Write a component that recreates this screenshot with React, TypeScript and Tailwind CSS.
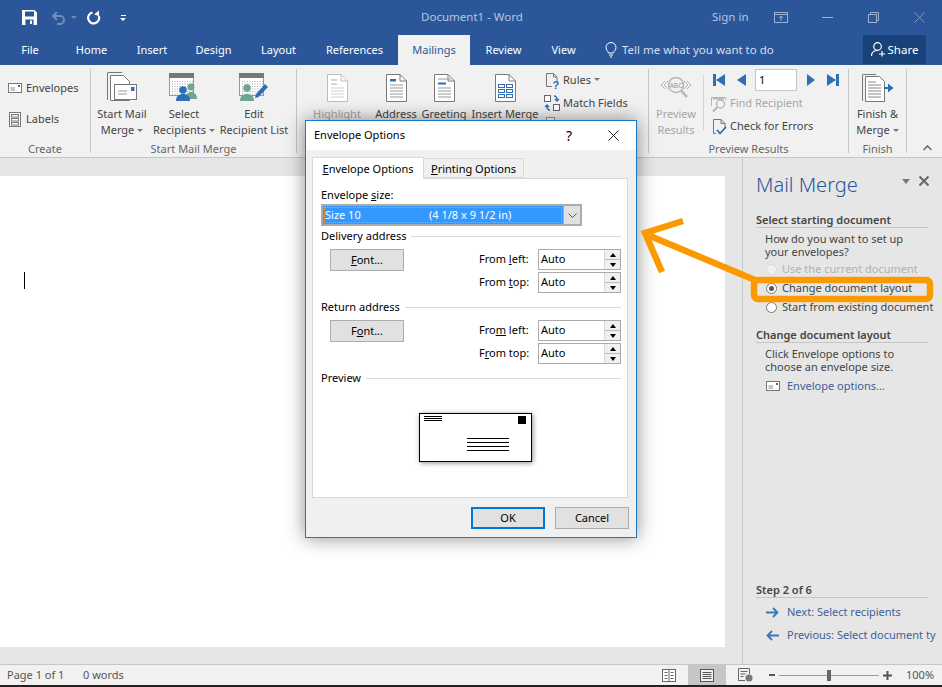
import React from "react";

const blue = "#2f6eb5";
const green = "#6fa58f";

function Save() {
  return (
    <svg width="15" height="15" viewBox="0 0 15 15">
      <path d="M0 0h12.500l2.500 2.500v12.500h-15z" fill="#fff" />
      <rect x="3" y="1.500" width="9" height="5" fill="#2b579a" />
      <rect x="3.500" y="9.500" width="8" height="5.500" fill="#2b579a" />
      <rect x="8" y="10.500" width="2" height="3.500" fill="#fff" />
    </svg>
  );
}

function Undo() {
  return (
    <svg width="15" height="14" viewBox="0 0 15 14" fill="none" stroke="#6f8dbb" strokeWidth="2">
      <path d="M6 1 2 5l4 4" />
      <path d="M2 5h7a4 4 0 0 1 0 8H6" />
    </svg>
  );
}

function Redo() {
  return (
    <svg width="15" height="15" viewBox="0 0 15 15" fill="none" stroke="#fff" strokeWidth="2.200">
      <path d="M6.500 2.500A5.500 5.500 0 1 0 12.800 6" />
      <path d="M8 4.500 13 .5V6z" fill="#fff" stroke="none" />
    </svg>
  );
}

function EnvSmall() {
  return (
    <svg width="14" height="10" viewBox="0 0 14 10" fill="none" className="shrink-0">
      <rect x=".5" y=".5" width="13" height="9" fill="#fff" stroke="#777" />
      <path d="M2.500 5H7M2.500 7H7" stroke="#888" />
      <rect x="10" y="2" width="2" height="2" fill={blue} />
    </svg>
  );
}

function LabelsIcon() {
  return (
    <svg width="12" height="15" viewBox="0 0 12 15" fill="#fff" stroke="#777" className="shrink-0">
      <rect x=".5" y=".5" width="11" height="14" />
      <rect x="2.500" y="2.500" width="7" height="2.500" />
      <rect x="2.500" y="6.500" width="7" height="2.500" />
      <rect x="2.500" y="10.500" width="7" height="2.500" />
    </svg>
  );
}

function StartMailIcon() {
  return (
    <svg width="30" height="31" viewBox="0 0 30 31" fill="none">
      <path d="M.5 1v27" stroke="#777" />
      <path d="M.5.5H15" stroke="#777" />
      <path d="M3.500 3.500h13l6 6v19h-19z" fill="#fff" stroke="#777" />
      <rect x="7.500" y="12.500" width="22" height="15" fill="#fff" stroke="#777" />
      <path d="M11 19h9M11 22h9" stroke="#999" />
      <rect x="24" y="15" width="3.500" height="4" fill={blue} />
    </svg>
  );
}

function Calendar() {
  const dots = [];
  for (let y = 8; y < 22; y += 2.500) {
    for (let x = 3; x < 25; x += 2.500) {
      dots.push(<rect key={x + "-" + y} x={x} y={y} width="1" height="1" fill="#aaa" />);
    }
  }
  return (
    <>
      <rect x=".5" y=".5" width="24" height="22" fill="#fff" stroke="#999" />
      <rect x="0" y="0" width="25" height="5" fill="#777" />
      {dots}
    </>
  );
}

function SelectIcon() {
  return (
    <svg width="30" height="29" viewBox="0 0 30 29">
      <Calendar />
      <circle cx="22" cy="14" r="3.500" fill={green} />
      <path d="M16 26c0-5 3-7 6-7s6 2 6 7z" fill={green} />
      <circle cx="14" cy="17" r="3.800" fill={blue} />
      <path d="M7 28c0-5 3-7 7-7s7 2 7 7z" fill={blue} />
    </svg>
  );
}

function EditIcon() {
  return (
    <svg width="30" height="29" viewBox="0 0 30 29">
      <Calendar />
      <circle cx="8" cy="15" r="3.800" fill={green} />
      <path d="M1 28c0-5 3-7 7-7s7 2 7 7z" fill={green} />
      <path d="M16 25l1-4L26 11l3 3-9.500 10z" fill={blue} />
    </svg>
  );
}

function Doc({ faded, children }: { faded?: boolean; children?: React.ReactNode }) {
  const line = faded ? "#c3bcc2" : "#7a7a7a";
  return (
    <svg width="21" height="28" viewBox="0 0 21 28" fill="none">
      <path d="M.5.500h13.500l6.500 6.500v20.500h-20z" fill="#fff" stroke={line} />
      <path d="M14 .5V7h6.500" stroke={line} />
      {children}
    </svg>
  );
}

function Lines({ ys, color = "#999" }: { ys: number[]; color?: string }) {
  return (
    <>
      {ys.map((y) => (
        <path key={y} d={`M4 ${y}h13`} stroke={color} />
      ))}
    </>
  );
}

function RulesIcon() {
  return (
    <svg width="15" height="16" viewBox="0 0 15 16" fill="none" className="shrink-0">
      <path d="M.5.500h7l3.500 3.500v6M.5.500v13H6" stroke="#777" />
      <path d="M7.500.500V4H11" stroke="#777" />
      <text x="6.500" y="15.500" fontSize="11" fontWeight="700" fill={blue} fontFamily="Liberation Sans, sans-serif">?</text>
    </svg>
  );
}

function MatchIcon() {
  return (
    <svg width="16" height="16" viewBox="0 0 16 16" fill="none" className="shrink-0">
      <rect x=".5" y=".5" width="6" height="6" fill="#fff" stroke="#666" />
      <rect x="9.500" y="9.500" width="6" height="6" fill="#fff" stroke="#666" />
      <path d="M10 1c2 0 3 1 3 4M11 4l2 2 2-2" stroke={blue} strokeWidth="1.400" />
      <path d="M6 15c-2 0-3-1-3-4M1 12l2-2 2 2" stroke={blue} strokeWidth="1.400" />
    </svg>
  );
}

function PreviewIcon() {
  return (
    <svg width="32" height="22" viewBox="0 0 32 22" fill="none" stroke="#b5b5b5">
      <path d="M5 4 1 8l4 4M8 4 4 8l4 4M27 4l4 4-4 4M24 4l4 4-4 4" />
      <circle cx="16" cy="8" r="7.500" fill="#f1f1f1" strokeWidth="1.500" />
      <path d="M21 13.500 27 20" strokeWidth="2.500" />
      <text x="9.500" y="10.500" fontSize="6.500" fill="#999" stroke="none" fontFamily="Liberation Sans, sans-serif">ABC</text>
    </svg>
  );
}

function FindIcon() {
  return (
    <svg width="16" height="16" viewBox="0 0 16 16" fill="none" stroke="#b5b5b5" className="shrink-0">
      <path d="M.5 10V1.500h14V4" />
      <path d="M2 2.500h11" strokeWidth="2" />
      <circle cx="9.500" cy="8" r="4" fill="#f1f1f1" strokeWidth="1.300" />
      <path d="M6.500 11 2 15.500" strokeWidth="2" />
    </svg>
  );
}

function CheckIcon() {
  return (
    <svg width="14" height="16" viewBox="0 0 14 16" fill="none" className="shrink-0">
      <path d="M.5.500h7.500L12 4.500v5M.5.500v14H3" stroke="#777" />
      <path d="M8 .5V4.500h4" stroke="#777" />
      <path d="M4 11l3 3.500L13 8" stroke={blue} strokeWidth="1.800" />
    </svg>
  );
}

function FinishIcon() {
  return (
    <svg width="32" height="28" viewBox="0 0 32 28" fill="none">
      <path d="M.5 1v26" stroke="#777" />
      <path d="M.5.500H14" stroke="#777" />
      <path d="M3.500 2.500h14l5 5v20h-19z" fill="#fff" stroke="#777" />
      <path d="M6 8h8M6 11h13M6 14h13M6 17h13M6 20h13M6 23h13" stroke="#888" />
      <path d="M22 13h4V9.500l5.500 4.500-5.500 4.500V15h-4z" fill={blue} />
    </svg>
  );
}

function Caret({ color = "#777" }: { color?: string }) {
  return <span className="inline-block ml-[3px] mb-[2px] w-0 h-0 border-x-[3px] border-x-transparent border-t-[3px]" style={{ borderTopColor: color }} />;
}

function BigButton({ width, icon, top, bottom, dim, caret }: { width: string; icon: React.ReactNode; top: string; bottom?: string; dim?: boolean; caret?: boolean }) {
  return (
    <div className={`${width} flex flex-col items-center shrink-0 leading-4 whitespace-nowrap ${dim ? "text-[#a6a6a6]" : ""}`}>
      <div className="h-[37px] flex items-center justify-center">{icon}</div>
      <div>{top}</div>
      {bottom && (
        <div>
          {bottom}
          {caret && <Caret />}
        </div>
      )}
    </div>
  );
}

function Group({ width, label, children }: { width: string; label: string; children: React.ReactNode }) {
  return (
    <div className={`${width} h-[84px] mt-[4px] border-r border-[#c6c6c6] shrink-0 flex flex-col`}>
      <div className="h-[69px] shrink-0 flex">{children}</div>
      <div className="mt-[3px] shrink-0 h-4 leading-4 text-center text-[#666] whitespace-nowrap">{label}</div>
    </div>
  );
}

function Spinner({ label }: { label: React.ReactNode }) {
  return (
    <div className="flex items-center h-[21px]">
      <div className="w-[59px] whitespace-nowrap">{label}</div>
      <div className="w-[83px] h-[21px] border border-[#ababab] bg-white flex items-center pl-[2px] justify-between">
        <span>Auto</span>
        <div className="w-[16px] h-full flex flex-col bg-[#f0f0f0] border-l border-[#d9d9d9]">
          <div className="flex-1 flex items-center justify-center border-b border-[#bbb]">
            <span className="w-0 h-0 border-x-[3px] border-x-transparent border-b-[4px] border-b-black" />
          </div>
          <div className="flex-1 flex items-center justify-center">
            <span className="w-0 h-0 border-x-[3px] border-x-transparent border-t-[4px] border-t-black" />
          </div>
        </div>
      </div>
    </div>
  );
}

function Legend({ text }: { text: string }) {
  return (
    <div className="flex items-center h-4 gap-[5px]">
      <span className="whitespace-nowrap">{text}</span>
      <div className="flex-1 h-px bg-[#d9d9d9]" />
    </div>
  );
}

function AddressRow({ f, left, top }: { f: React.ReactNode; left: React.ReactNode; top: React.ReactNode }) {
  return (
    <div className="flex mt-[5px]">
      <div className="ml-[9px] w-[74px] h-[22px] bg-[#e1e1e1] border border-[#adadad] flex items-center justify-center">{f}</div>
      <div className="ml-[75px] flex flex-col gap-[2px]">
        <Spinner label={left} />
        <Spinner label={top} />
      </div>
    </div>
  );
}

function Radio({ label, state }: { label: string; state: "off" | "on" | "dim" }) {
  return (
    <div className={`h-[19px] flex items-center pl-[10px] whitespace-nowrap ${state === "dim" ? "text-[#b1b1b1]" : ""}`}>
      <span className={`w-[11px] h-[11px] shrink-0 rounded-full border flex items-center justify-center ${state === "dim" ? "border-[#dcdcdc] bg-[#f1f1f1]" : "border-[#777] bg-white"}`}>
        {state === "on" && <span className="w-[5px] h-[5px] rounded-full bg-[#555]" />}
      </span>
      <span className="ml-[5px]">{label}</span>
    </div>
  );
}

function Heading({ text }: { text: string }) {
  return <div className="h-4 leading-[15px] mr-[14px] border-b border-[#c6c6c6] font-semibold text-[#444] whitespace-nowrap">{text}</div>;
}

function StepLink({ dir, text }: { dir: "next" | "prev"; text: string }) {
  return (
    <div className="h-4 flex items-center pl-[10px] text-[#3f5f99] whitespace-nowrap">
      <svg width="13" height="11" viewBox="0 0 13 11" fill="none" stroke="#3c78b8" strokeWidth="1.800" className="shrink-0">
        {dir === "next" ? <path d="M0 5.500h11M7 1l4.500 4.500L7 10" /> : <path d="M13 5.500H2M6 1 1.500 5.500 6 10" />}
      </svg>
      <span className="ml-[8px]">{text}</span>
    </div>
  );
}

export default function App() {
  return (
    <div className="relative w-[942px] h-[687px] overflow-hidden flex flex-col bg-[#e6e6e6] text-[11px] text-[#444] font-['Noto_Sans',sans-serif]">
      {/* title bar */}
      <div className="h-[35px] shrink-0 bg-[#2b579a] flex items-center text-[#b4c6e0] text-[11.5px]">
        <div className="ml-[22px]"><Save /></div>
        <div className="ml-[14px]"><Undo /></div>
        <span className="ml-[5px] w-0 h-0 border-x-[3px] border-x-transparent border-t-[3px] border-t-[#6f8dbb]" />
        <div className="ml-[9px]"><Redo /></div>
        <div className="ml-[19px] flex flex-col items-center gap-[2px]">
          <span className="w-[5px] h-px bg-white" />
          <span className="w-0 h-0 border-x-[3px] border-x-transparent border-t-[3px] border-t-white" />
        </div>
        <div className="ml-[293px] w-[106px] -mt-[2px] text-center whitespace-nowrap">Document1 - Word</div>
        <div className="ml-[187px] w-[38px] -mt-[2px] whitespace-nowrap">Sign in</div>
        <svg className="ml-[24px]" width="14" height="11" viewBox="0 0 14 11" fill="none" stroke="#9db3d3">
          <rect x=".5" y=".5" width="13" height="10" />
          <path d="M.5 2.500h13M7 9V4M5 6l2-2 2 2" />
        </svg>
        <div className="ml-[34px] w-[11px] h-px bg-[#9db3d3]" />
        <svg className="ml-[35px]" width="11" height="11" viewBox="0 0 11 11" fill="none" stroke="#9db3d3">
          <rect x=".5" y="2.500" width="8" height="8" />
          <path d="M2.500 2.500v-2h8v8h-2" />
        </svg>
        <svg className="ml-[35px]" width="11" height="11" viewBox="0 0 11 11" fill="none" stroke="#7e99c4">
          <path d="M.5.500l10 10M10.500.500l-10 10" />
        </svg>
      </div>

      {/* tabs */}
      <div className="h-[30px] shrink-0 bg-[#2b579a] flex text-white">
        {[
          ["File", "w-[60px]"],
          ["Home", "w-[63px]"],
          ["Insert", "w-[58px]"],
          ["Design", "w-[65px]"],
          ["Layout", "w-[65px]"],
          ["References", "w-[87px]"],
        ].map(([name, w]) => (
          <div key={name} className={`${w} h-full flex items-center justify-center`}>{name}</div>
        ))}
        <div className="w-[72px] h-full bg-[#f1f1f1] text-[#2b579a] flex items-center justify-center">Mailings</div>
        <div className="w-[67px] h-full flex items-center justify-center">Review</div>
        <div className="w-[53px] h-full flex items-center justify-center">View</div>
        <div className="ml-[15px] w-[258px] h-full flex items-center text-[#d5dfed] text-[11.5px] whitespace-nowrap">
          <svg width="12" height="16" viewBox="0 0 12 16" fill="none" stroke="#fff">
            <path d="M3.500 11C3 9 1 8 1 5.500a5 5 0 0 1 10 0C11 8 9 9 8.500 11zM4 13h4M5 15h2" />
          </svg>
          <span className="ml-[5px]">Tell me what you want to do</span>
        </div>
        <div className="w-[63px] h-[29px] bg-[#17437a] text-[11.5px] flex items-center justify-center gap-[3px]">
          <svg width="14" height="15" viewBox="0 0 14 15" fill="none" stroke="#fff" strokeWidth="1.200">
            <circle cx="6.500" cy="4.500" r="3.800" />
            <path d="M.5 14c0-3.500 2.500-5.500 6-5.500M11 9v5.500M8 12h6" />
          </svg>
          <span>Share</span>
        </div>
      </div>

      {/* ribbon */}
      <div className="h-[93px] shrink-0 bg-[#f1f1f1] border-b border-[#c6c6c6] flex">
        <Group width="w-[91px]" label="Create">
          <div className="flex flex-col">
            <div className="mt-[11px] h-4 flex items-center pl-[8px] whitespace-nowrap">
              <EnvSmall />
              <span className="ml-[4px]">Envelopes</span>
            </div>
            <div className="mt-[15px] h-4 flex items-center pl-[9px] whitespace-nowrap">
              <LabelsIcon />
              <span className="ml-[5px]">Labels</span>
            </div>
          </div>
        </Group>
        <Group width="w-[206px]" label="Start Mail Merge">
          <BigButton width="w-[62px]" icon={<StartMailIcon />} top="Start Mail" bottom="Merge" caret />
          <BigButton width="w-[62px]" icon={<SelectIcon />} top="Select" bottom="Recipients" caret />
          <BigButton width="w-[78px]" icon={<EditIcon />} top="Edit" bottom="Recipient List" />
        </Group>
        <Group width="w-[352px]" label="">
          <div className="w-[10px]" />
          <BigButton width="w-[60px]" dim icon={<Doc faded><rect x="4" y="5" width="6" height="2" fill="#dcd0da" /><rect x="4" y="9" width="6" height="2" fill="#dcd0da" /><Lines ys={[14, 17, 20, 23]} color="#d7cbd4" /></Doc>} top="Highlight" />
          <div className="w-[5px]" />
          <BigButton width="w-[48px]" icon={<Doc><rect x="4" y="5" width="6" height="2.500" fill={blue} /><Lines ys={[11, 14, 17, 20, 23]} /></Doc>} top="Address" />
          <BigButton width="w-[48px]" icon={<Doc><Lines ys={[5, 14, 17, 20, 23]} /><rect x="4" y="8.500" width="8" height="2" fill={blue} /></Doc>} top="Greeting" />
          <BigButton width="w-[74px]" icon={<Doc><g stroke={blue} fill="none"><rect x="3.500" y="10.500" width="6" height="3" /><rect x="11.500" y="10.500" width="6" height="3" /><rect x="3.500" y="15.500" width="6" height="3" /><rect x="11.500" y="15.500" width="6" height="3" /><rect x="3.500" y="20.500" width="6" height="3" /><rect x="11.500" y="20.500" width="6" height="3" /></g></Doc>} top="Insert Merge" />
          <div className="flex flex-col ml-[2px] whitespace-nowrap">
            <div className="h-[23px] flex items-center pl-[2px]">
              <RulesIcon />
              <span className="ml-[2px]">Rules</span>
              <Caret />
            </div>
            <div className="h-[22px] flex items-center">
              <MatchIcon />
              <span className="ml-[3px]">Match Fields</span>
            </div>
            <div className="mt-[3px] ml-[2px] w-[9px] h-[6px] border border-[#999] bg-white" />
          </div>
        </Group>
        <Group width="w-[200px]" label="Preview Results">
          <BigButton width="w-[54px]" dim icon={<PreviewIcon />} top="Preview" bottom="Results" />
          <div className="w-px h-[55px] mt-[6px] bg-[#d4d4d4]" />
          <div className="flex flex-col">
            <div className="h-[22px] flex items-center pl-[9px]">
              <svg width="12" height="12" viewBox="0 0 12 12" fill={blue}><rect width="3" height="12" /><path d="M12 0v12L3 6z" /></svg>
              <svg className="ml-[12px]" width="9" height="12" viewBox="0 0 9 12" fill={blue}><path d="M9 0v12L0 6z" /></svg>
              <div className="ml-[9px] w-[42px] h-[22px] bg-white border border-[#c6c6c6] flex items-center pl-[3px] text-black">1</div>
              <svg className="ml-[10px]" width="8" height="12" viewBox="0 0 8 12" fill={blue}><path d="M0 0v12l8-6z" /></svg>
              <svg className="ml-[12px]" width="12" height="12" viewBox="0 0 12 12" fill={blue}><rect x="9" width="3" height="12" /><path d="M0 0v12l9-6z" /></svg>
            </div>
            <div className="mt-px h-[23px] flex items-center pl-[7px] text-[#a6a6a6] whitespace-nowrap">
              <FindIcon />
              <span className="ml-[3px]">Find Recipient</span>
            </div>
            <div className="h-[23px] flex items-center pl-[9px] whitespace-nowrap">
              <CheckIcon />
              <span className="ml-[3px]">Check for Errors</span>
            </div>
          </div>
        </Group>
        <Group width="w-[58px]" label="Finish">
          <BigButton width="w-[57px]" icon={<FinishIcon />} top="Finish &" bottom="Merge" caret />
        </Group>
        <div className="flex-1 relative">
          <svg className="absolute right-[10px] bottom-[6px]" width="9" height="6" viewBox="0 0 9 6" fill="none" stroke="#666" strokeWidth="1.500">
            <path d="M.5 5 4.500 1l4 4" />
          </svg>
        </div>
      </div>

      {/* document and task pane */}
      <div className="flex-1 flex min-h-0">
        <div className="w-[742px] shrink-0 pt-[18px] pb-[17px]">
          <div className="w-[725px] h-full bg-white pt-[96px] pl-[24px]">
            <div className="w-px h-[17px] bg-black" />
          </div>
        </div>
        <div className="flex-1 border-l border-[#c6c6c6] pl-[13px] pt-[13px] pb-[21px] flex flex-col overflow-hidden">
          <div className="flex items-center h-[28px]">
            <span className="text-[20px] leading-7 text-[#2b579a] font-light whitespace-nowrap">Mail Merge</span>
            <span className="ml-auto mb-[8px] w-0 h-0 border-x-[4px] border-x-transparent border-t-[5px] border-t-[#777]" />
            <svg className="ml-[9px] mr-[13px] mb-[8px]" width="10" height="10" viewBox="0 0 10 10" fill="none" stroke="#666" strokeWidth="2">
              <path d="M.5.500l9 9M9.500.500l-9 9" />
            </svg>
          </div>
          <div className="mt-[13px]"><Heading text="Select starting document" /></div>
          <div className="mt-[4px] pl-[9px] leading-[13px] whitespace-nowrap">How do you want to set up<br />your envelopes?</div>
          <div className="mt-[2px]">
            <Radio label="Use the current document" state="dim" />
            <Radio label="Change document layout" state="on" />
            <Radio label="Start from existing document" state="off" />
          </div>
          <div className="mt-[10px]"><Heading text="Change document layout" /></div>
          <div className="mt-[4px] pl-[9px] leading-[13px] whitespace-nowrap">Click Envelope options to<br />choose an envelope size.</div>
          <div className="mt-[5px] h-4 pl-[10px] flex items-center text-[#3f5f99] whitespace-nowrap">
            <EnvSmall />
            <span className="ml-[7px]">Envelope options...</span>
          </div>
          <div className="mt-auto"><Heading text="Step 2 of 6" /></div>
          <div className="mt-[6px]"><StepLink dir="next" text="Next: Select recipients" /></div>
          <div className="mt-[7px]"><StepLink dir="prev" text="Previous: Select document ty" /></div>
        </div>
      </div>

      {/* status bar */}
      <div className="h-[21px] shrink-0 bg-[#f1f1f1] border-t border-[#c6c6c6] flex items-center text-[#555]">
        <div className="w-[662px] shrink-0 flex whitespace-nowrap">
          <span className="ml-[7px] w-[76px]">Page 1 of 1</span>
          <span>0 words</span>
        </div>
        <svg width="14" height="13" viewBox="0 0 14 13" fill="#fff" stroke="#666">
          <rect x=".5" y=".5" width="13" height="12" />
          <path d="M7 .5v12M2.500 3.500h3M2.500 6.500h3M2.500 9.500h3M8.500 3.500h3M8.500 6.500h3M8.500 9.500h3" />
        </svg>
        <div className="ml-[12px] w-[38px] h-full bg-[#c6c6c6] flex items-center justify-center">
          <svg width="14" height="13" viewBox="0 0 14 13" fill="#f1f1f1" stroke="#555">
            <rect x=".5" y=".5" width="13" height="12" />
            <path d="M2.500 3.500h9M2.500 5.500h9M2.500 7.500h9M2.500 9.500h9" />
          </svg>
        </div>
        <svg className="ml-[12px]" width="15" height="14" viewBox="0 0 15 14" fill="none" stroke="#666">
          <path d="M7 12.500H.5V.5h11V6M2.500 3.500h7M2.500 6h5M2.500 8.500h3" />
          <circle cx="11" cy="10" r="3.500" fill="#777" stroke="none" />
        </svg>
        <div className="ml-[16px] w-[6px] h-[2px] bg-[#555]" />
        <div className="ml-[4px] w-[100px] h-px bg-[#999] relative">
          <div className="absolute left-[48px] -top-[5px] w-[4px] h-[11px] bg-[#666]" />
        </div>
        <svg className="ml-[4px]" width="9" height="9" viewBox="0 0 9 9" stroke="#555" strokeWidth="2">
          <path d="M0 4.500h9M4.500 0v9" />
        </svg>
        <span className="ml-[14px] whitespace-nowrap">100%</span>
      </div>
      <div className="h-[2px] shrink-0 bg-[#222]" />

      {/* dialog */}
      <div className="absolute left-[305px] top-[120px] w-[332px] h-[418px] border border-[#1979ca] bg-[#f0f0f0] flex flex-col text-black shadow-[0_0_18px_rgba(0,0,0,0.45)]">
        <div className="h-[29px] shrink-0 bg-white flex items-center pl-[8px]">
          <span>Envelope Options</span>
          <span className="ml-auto text-[14px]">?</span>
          <svg className="ml-[36px] mr-[17px]" width="11" height="11" viewBox="0 0 11 11" fill="none" stroke="#222">
            <path d="M.5.500l10 10M10.500.500l-10 10" />
          </svg>
        </div>
        <div className="flex-1 pl-[6px] pr-[7px] pt-[7px]">
          <div className="flex items-end h-[22px] relative z-10">
            <div className="w-[112px] h-[22px] pt-px bg-white border border-[#d9d9d9] border-b-0 flex items-center justify-center whitespace-nowrap">
              <span><u>E</u>nvelope Options</span>
            </div>
            <div className="w-[100px] h-[20px] pt-[2px] mb-px bg-[#f0f0f0] border border-[#d9d9d9] border-l-0 flex items-center justify-center whitespace-nowrap">
              <span><u>P</u>rinting Options</span>
            </div>
          </div>
          <div className="-mt-px w-[316px] h-[320px] bg-white border border-[#d9d9d9] pl-[8px] pr-[6px] pt-[8px]">
            <div className="h-4 leading-4">Envelope <u>s</u>ize:</div>
            <div className="mt-px w-[261px] h-[22px] border-2 border-[#ababab] flex bg-white">
              <div className="flex-1 h-full bg-[#3399ff] text-white flex items-center pl-[2px] whitespace-nowrap outline-1 outline-dotted outline-[#e0a060] -outline-offset-2">
                <span className="w-[104px]">Size 10</span>
                <span>(4 1/8 x 9 1/2 in)</span>
              </div>
              <div className="w-[17px] h-full bg-[#e1e1e1] border-l border-[#ababab] flex items-center justify-center">
                <svg width="9" height="5" viewBox="0 0 9 5" fill="none" stroke="#555"><path d="M.5.500l4 4 4-4" /></svg>
              </div>
            </div>
            <div className="mt-[2px]"><Legend text="Delivery address" /></div>
            <AddressRow f={<span><u>F</u>ont...</span>} left={<span>From <u>l</u>eft:</span>} top={<span>From <u>t</u>op:</span>} />
            <div className="mt-[6px]"><Legend text="Return address" /></div>
            <AddressRow f={<span>F<u>o</u>nt...</span>} left={<span>Fro<u>m</u> left:</span>} top={<span>F<u>r</u>om top:</span>} />
            <div className="mt-[6px]"><Legend text="Preview" /></div>
            <div className="mt-[27px] ml-[98px] w-[113px] h-[49px] bg-white border border-black shadow-[1px_1px_5px_rgba(0,0,0,0.45)] relative">
              <div className="absolute left-[4px] top-[2px] w-[18px] h-[5px] border-y border-black">
                <div className="mt-px h-px bg-black" />
              </div>
              <div className="absolute right-[5px] top-[2px] w-[8px] h-[8px] bg-black" />
              <div className="absolute left-[47px] top-[24px] w-[42px] h-[13px] flex flex-col justify-between">
                <div className="h-px bg-black" />
                <div className="h-px bg-black" />
                <div className="h-px bg-black" />
                <div className="h-px bg-black" />
              </div>
            </div>
          </div>
          <div className="mt-[9px] flex justify-end gap-[10px]">
            <div className="w-[74px] h-[22px] bg-[#e1e1e1] border-2 border-[#0078d7] flex items-center justify-center">OK</div>
            <div className="w-[74px] h-[22px] bg-[#e1e1e1] border border-[#adadad] flex items-center justify-center">Cancel</div>
          </div>
        </div>
      </div>

      {/* orange callout */}
      <svg className="absolute left-0 top-0 pointer-events-none" width="942" height="687" viewBox="0 0 942 687" fill="none" stroke="#fb9a00" strokeWidth="6.500">
        <rect x="754" y="280" width="176" height="19" rx="4" />
        <path d="M650 236 755 280" />
        <path d="M683 221 645 233 662 272" />
      </svg>
    </div>
  );
}
